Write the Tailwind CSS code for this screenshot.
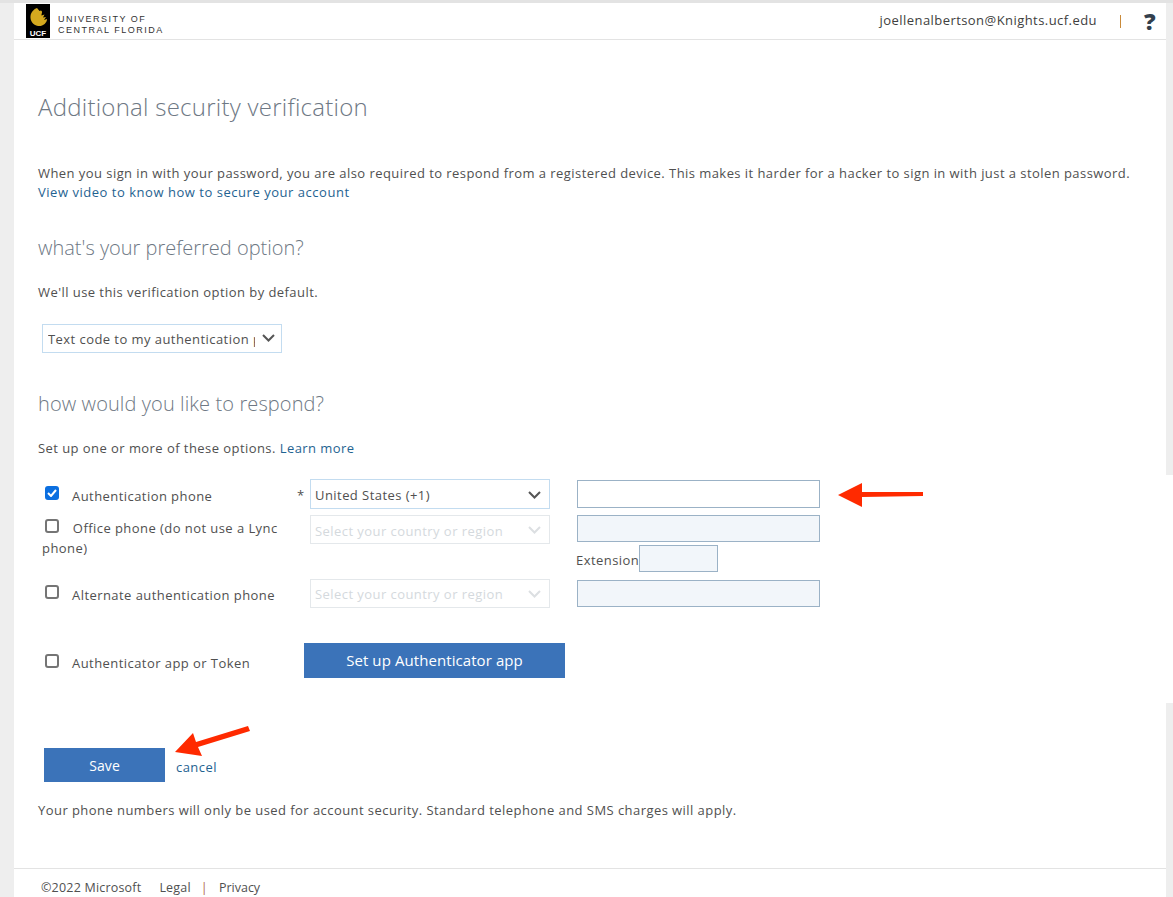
<!DOCTYPE html>
<html lang="en">
<head>
    <meta charset="UTF-8">
    <meta name="viewport" content="width=device-width, initial-scale=1.0">
    <title>Additional security verification</title>
    <script src="https://cdn.jsdelivr.net/npm/@tailwindcss/browser@4"></script>
</head>
<body class="bg-white h-[897px] overflow-hidden font-['Open_Sans',sans-serif] text-[13px] tracking-[0.44px] text-[#505050]">
    <div class="h-[3px] bg-[#e3e3e3]"></div>
    <div class="flex h-[894px]">
        <div class="w-[14px] bg-[#eeeeee]"></div>

        <div class="flex-1 flex flex-col relative">
            <!-- header -->
            <header class="h-[37px] border-b border-[#e3e3e3] flex items-center pl-[12px] pr-[10px]">
                <svg class="w-[24px] h-[34px]" viewBox="0 0 24 34">
                    <rect width="24" height="34" fill="#000"/>
                    <path d="M11 4 C8 5 5 8 4.500 12 C4 17 7 21 12 22 C17 22.500 21 19 21 15 L18 16 L20 13 L17 13.500 L18.500 10.500 L15.500 11.500 C15.500 9 17 8 15 6.500 L13.500 7 Z" fill="#d4a91f"/>
                    <text x="12" y="31.500" text-anchor="middle" fill="#fff" font-size="8" font-weight="700" letter-spacing="0" font-family="Liberation Sans">UCF</text>
                </svg>
                <div class="ml-[8px] mt-[7px] font-['Liberation_Sans',sans-serif] text-[9px] leading-[11px] tracking-[1.5px] text-[#333]">
                    <div>UNIVERSITY OF</div>
                    <div>CENTRAL FLORIDA</div>
                </div>
                <div class="ml-auto text-[#404040]">joellenalbertson@Knights.ucf.edu</div>
                <div class="ml-[23px] w-px h-[13px] bg-[#c98a3a]"></div>
                <div class="ml-[23px] text-[23px] leading-none font-extrabold text-[#333f4d]">?</div>
            </header>

            <main class="pl-[24px] pr-[10px]">
                <h1 class="mt-[49px] text-[24px] leading-[36px] tracking-[0.25px] font-light text-[#6e7884]">Additional security verification</h1>
                <p class="mt-[39px] leading-[19px]">When you sign in with your password, you are also required to respond from a registered device. This makes it harder for a hacker to sign in with just a stolen password.<br><a class="text-[#1f6391] tracking-[0.53px]">View video to know how to secure your account</a></p>

                <h2 class="mt-[31px] text-[20px] leading-[30px] tracking-normal font-light text-[#6e7884]">what's your preferred option?</h2>
                <p class="mt-[20px] leading-[18px]">We'll use this verification option by default.</p>
                <div class="relative mt-[23px] ml-[4px] w-[240px] h-[29px]">
                    <select class="appearance-none w-full h-full border border-[#c3dcf0] pl-[5px] pr-[26px] pt-[3px] text-[#505050] bg-white">
                        <option>Text code to my authentication phone</option>
                    </select>
                    <svg class="absolute right-[7px] top-[10px] w-[13px] h-[8px]" viewBox="0 0 13 8" fill="none" stroke="#555" stroke-width="2"><path d="M1 1l5.500 5.500L12 1"/></svg>
                </div>

                <h2 class="mt-[36px] text-[20px] leading-[30px] tracking-[0.1px] font-light text-[#6e7884]">how would you like to respond?</h2>
                <p class="mt-[20px] leading-[18px]">Set up one or more of these options. <a class="text-[#1f6391]">Learn more</a></p>

                <!-- phone rows -->
                <div class="mt-[22px] flex h-[36px]">
                    <div class="w-[258px] pl-[7px] flex items-start pt-[7px]">
                        <span class="relative w-[14px] h-[14px] rounded-[3px] bg-[#0b6fe0] shrink-0">
                            <svg class="absolute left-[2px] top-[3px] w-[10px] h-[8px]" viewBox="0 0 10 8" fill="none" stroke="#fff" stroke-width="2"><path d="M1 4l3 3 5-6"/></svg>
                        </span>
                        <span class="ml-[13px] leading-[18px] mt-[1px]">Authentication phone</span>
                    </div>
                    <div class="w-[14px] pl-[1px] pt-[7px] leading-[18px]">*</div>
                    <div class="relative w-[240px] h-[30px]">
                        <select class="appearance-none w-full h-full border border-[#c3dcf0] pl-[4px] pt-[4px] text-[#505050] bg-white">
                            <option>United States (+1)</option>
                        </select>
                        <svg class="absolute right-[9px] top-[12px] w-[13px] h-[8px]" viewBox="0 0 13 8" fill="none" stroke="#555" stroke-width="2"><path d="M1 1l5.500 5.500L12 1"/></svg>
                    </div>
                    <input type="text" class="ml-[27px] w-[243px] h-[28px] mt-[1px] border border-[#9bb2c6] bg-white">
                </div>

                <div class="flex h-[64px]">
                    <div class="w-[272px] pl-[4px] pt-[3px] leading-[20px]">
                        <span class="inline-block align-[0px] ml-[3px] w-[14px] h-[14px] rounded-[3px] border-2 border-[#757575] bg-white"></span>
                        <span class="ml-[10px]">Office phone (do not use a Lync</span><br>phone)
                    </div>
                    <div class="relative w-[240px] h-[29px]">
                        <select disabled class="appearance-none w-full h-full border border-[#e4e8eb] pl-[4px] pt-[5px] text-[#d4d9dd] bg-white">
                            <option>Select your country or region</option>
                        </select>
                        <svg class="absolute right-[9px] top-[11px] w-[13px] h-[8px]" viewBox="0 0 13 8" fill="none" stroke="#dcdfe2" stroke-width="2"><path d="M1 1l5.500 5.500L12 1"/></svg>
                    </div>
                    <div class="ml-[26px] flex flex-col">
                        <input type="text" disabled class="ml-[1px] w-[243px] h-[27px] border border-[#9bb2c6] bg-[#f2f6fa]">
                        <div class="mt-[3px] flex items-center">
                            <span class="leading-[18px] mt-[3px]">Extension</span>
                            <input type="text" disabled class="w-[79px] h-[27px] border border-[#9bb2c6] bg-[#f2f6fa]">
                        </div>
                    </div>
                </div>

                <div class="flex h-[29px]">
                    <div class="w-[272px] pl-[7px] flex items-start pt-[6px]">
                        <span class="w-[14px] h-[14px] rounded-[3px] border-2 border-[#757575] bg-white shrink-0"></span>
                        <span class="ml-[13px] leading-[18px] mt-[1px]">Alternate authentication phone</span>
                    </div>
                    <div class="relative w-[240px] h-[29px]">
                        <select disabled class="appearance-none w-full h-full border border-[#e4e8eb] pl-[4px] pt-[3px] text-[#d4d9dd] bg-white">
                            <option>Select your country or region</option>
                        </select>
                        <svg class="absolute right-[9px] top-[11px] w-[13px] h-[8px]" viewBox="0 0 13 8" fill="none" stroke="#dcdfe2" stroke-width="2"><path d="M1 1l5.500 5.500L12 1"/></svg>
                    </div>
                    <input type="text" disabled class="ml-[27px] w-[243px] h-[27px] mt-[1px] border border-[#9bb2c6] bg-[#f2f6fa]">
                </div>

                <div class="mt-[35px] flex h-[35px]">
                    <div class="w-[266px] pl-[7px] flex items-start pt-[11px]">
                        <span class="w-[14px] h-[14px] rounded-[3px] border-2 border-[#757575] bg-white shrink-0"></span>
                        <span class="ml-[13px] leading-[18px]">Authenticator app or Token</span>
                    </div>
                    <button class="w-[261px] h-[35px] bg-[#3b73b9] text-white text-[15px] tracking-[0.08px]">Set up Authenticator app</button>
                </div>

                <div class="mt-[70px] ml-[6px] flex items-end">
                    <button class="w-[121px] h-[34px] bg-[#3b73b9] text-white text-[14px] tracking-[0.1px]">Save</button>
                    <a class="ml-[11px] mb-[6px] leading-[18px] text-[#1f6391]">cancel</a>
                </div>
                <p class="mt-[19px] leading-[18px]">Your phone numbers will only be used for account security. Standard telephone and SMS charges will apply.</p>
            </main>

            <footer class="absolute left-0 right-0 top-[865px] border-t border-[#e3e3e3] pl-[27px] pt-[10px] flex leading-[18px] text-[12.5px] tracking-[0.2px]">
                <span>©2022 Microsoft</span>
                <a class="ml-[18px]">Legal</a>
                <span class="ml-[10px] text-[#b06a50]">|</span>
                <a class="ml-[11px] tracking-normal">Privacy</a>
            </footer>

            <!-- red annotation arrows -->
            <svg class="absolute left-[820px] top-[475px] w-[90px] h-[30px]" viewBox="0 0 90 30" fill="#ff2a00"><path d="M4 17 L28 5 L28 14 L89 14 L89 18 L28 19 L28 29 Z"/></svg>
            <svg class="absolute left-[155px] top-[720px] w-[85px] h-[40px]" viewBox="0 0 85 40" fill="#ff2a00"><path d="M6 29 L24 10 L27 19 L79 3 L81 8 L29 24 L33 33 Z"/></svg>
        </div>

        <div class="w-[7px] flex flex-col">
            <div class="h-[472px] bg-[#eeeeee]"></div>
            <div class="h-[228px]"></div>
            <div class="flex-1 bg-[#eeeeee]"></div>
        </div>
    </div>
</body>
</html>
